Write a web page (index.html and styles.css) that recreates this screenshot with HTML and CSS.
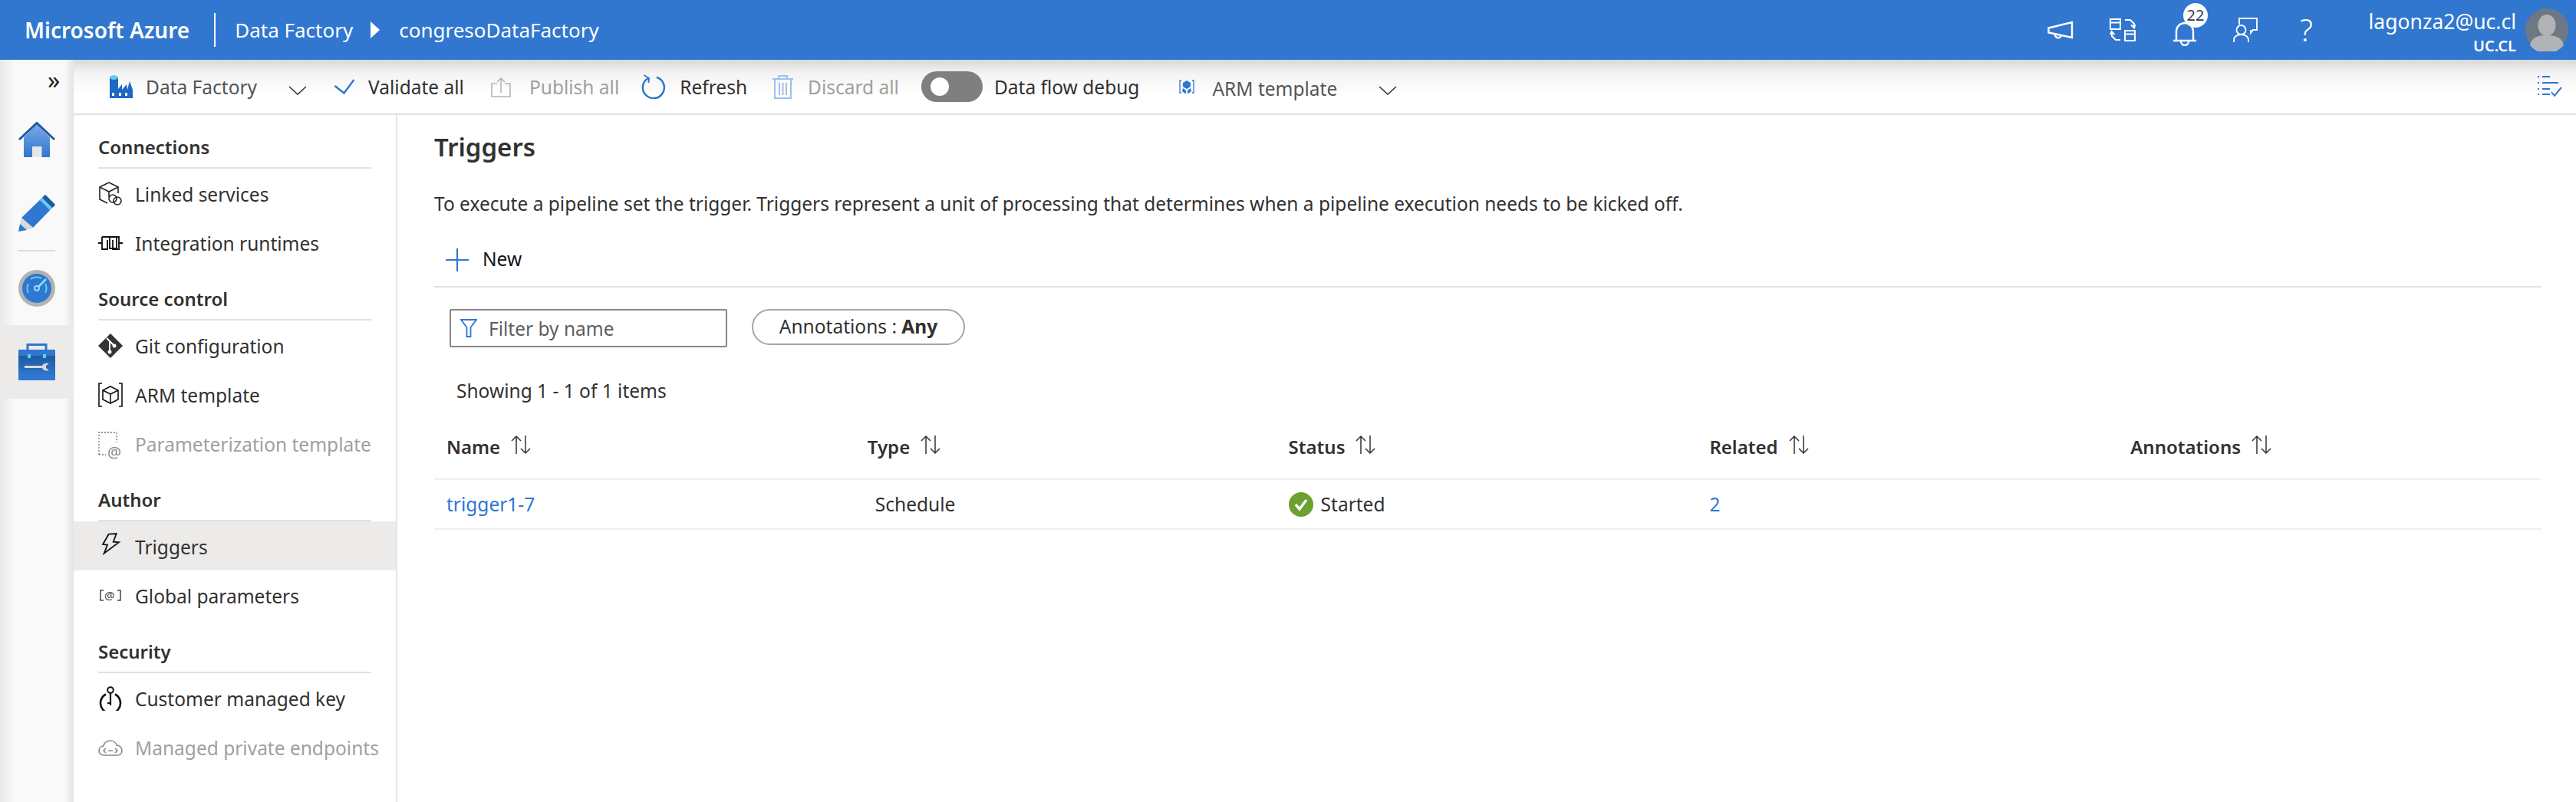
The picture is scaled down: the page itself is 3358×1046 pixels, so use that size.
FILE: index.html
```html
<!DOCTYPE html>
<html lang="en">
<head>
    <meta charset="UTF-8">
    <title>Triggers - Data Factory</title>
    <link rel="stylesheet" href="styles.css">
</head>
<body>
    <header class="topbar">
        <span class="brand">Microsoft Azure</span>
        <span class="crumb">Data Factory</span>
        <svg class="crumb-arrow" viewBox="0 0 12 22"><path d="M0 0L12 11L0 22Z" fill="#fff"/></svg>
        <span class="crumb">congresoDataFactory</span>

        <div class="top-icons">
            <svg class="top-icon megaphone" viewBox="0 0 34 24" fill="none" stroke="#fff" stroke-width="2.4"><path d="M1.500 9.500L32 2V22L1.500 15.500Z"/><path d="M10 17.500a4 4 0 0 0 8 1.500"/></svg>
            <svg class="top-icon switcher" viewBox="0 0 34 30" fill="none" stroke="#fff" stroke-width="2"><rect x="1" y="1" width="13" height="13"/><path d="M1 5.500H14M20 2H27L32 7V12M28 8.500L32 12.500L33.500 8"/><rect x="20" y="16" width="13" height="13"/><path d="M20 20.500H33M14 28H8L3 23V17M6.500 21L2.500 17L1 21"/></svg>
            <div class="bell-wrap">
                <svg class="bell" viewBox="0 0 30 32" fill="none" stroke="#fff" stroke-width="2.400"><path d="M4 24V13a11 11 0 0 1 22 0V24M0 25H30"/><path d="M10 26a5 5 0 0 0 10 0"/></svg>
                <span class="badge">22</span>
            </div>
            <svg class="top-icon feedback" viewBox="0 0 32 32" fill="none" stroke="#fff" stroke-width="1.800"><path d="M8 9V1H31V16H26L23 20V16"/><circle cx="10.500" cy="16" r="6"/><path d="M1 32V29C1 25 5 22 10.500 22S20 25 20 29V32"/></svg>
            <span class="help">?</span>
        </div>

        <div class="user">
            <span class="user-mail">lagonza2@uc.cl</span>
            <span class="user-org">UC.CL</span>
        </div>
        <svg class="avatar" viewBox="0 0 56 56">
            <circle cx="28" cy="28" r="28" fill="#6e7884"/>
            <ellipse cx="28" cy="22" rx="11.500" ry="14" fill="#b1b3b6"/>
            <path d="M6 48C8 38 16 35 28 35S48 38 50 48A28 28 0 0 1 6 48Z" fill="#b1b3b6"/>
        </svg>
    </header>

    <div class="shell">
        <nav class="rail">
            <div class="rail-expand">»</div>
            <svg class="rail-icon home" viewBox="0 0 48 46">
                <defs>
                    <linearGradient id="blueDown" x1="0" y1="0" x2="0" y2="1"><stop offset="0" stop-color="#7aa9e6"/><stop offset="1" stop-color="#2f77d0"/></linearGradient>
                </defs>
                <path d="M7 20L24 3L41 20V46H7Z" fill="url(#blueDown)"/>
                <path d="M1 23L24 1.500L47 23" fill="none" stroke="#1f5a9e" stroke-width="3"/>
                <rect x="18" y="32" width="12.500" height="14" fill="#e6e6e6"/>
            </svg>
            <svg class="rail-icon pencil" viewBox="0 0 48 48">
                <path d="M4 30L35 0L48 13L19 43Z" fill="#2f77d0"/>
                <path d="M33 2L35 0L48 13L46 15L44 17L31 4Z" fill="#1f5a9e"/>
                <path d="M28 7L31 4L44 17L41 20Z" fill="#63cdf2"/>
                <path d="M4 30L19 43L11 46L2 38Z" fill="#d9d9d9"/>
                <path d="M2 38L11 46L0 48Z" fill="#2f77d0"/>
            </svg>
            <div class="rail-rule"></div>
            <svg class="rail-icon gauge" viewBox="0 0 48 48" fill="none">
                <circle cx="24" cy="24" r="24" fill="#b3b3b3"/>
                <circle cx="24" cy="24" r="19" fill="#2f77d0"/>
                <circle cx="24" cy="24" r="3" stroke="#8fe0f8" stroke-width="2"/>
                <path d="M26 22L36 12" stroke="#8fe0f8" stroke-width="2.500"/>
                <path d="M13 30a13 13 0 0 1 0-12M16 12a14 14 0 0 1 14-1M35 18a13 13 0 0 1 0 12" stroke="#63cdf2" stroke-width="2"/>
            </svg>
            <div class="rail-active">
                <svg class="rail-icon tools" viewBox="0 0 48 48">
                    <defs>
                        <linearGradient id="boxDown" x1="0" y1="0" x2="0" y2="1"><stop offset="0" stop-color="#1f5a9e"/><stop offset="1" stop-color="#2f77d0"/></linearGradient>
                    </defs>
                    <path d="M12 8V1.500H36V8" fill="none" stroke="#2f77d0" stroke-width="3"/>
                    <rect x="0" y="8" width="48" height="40" rx="1" fill="#2f77d0"/>
                    <rect x="0" y="16" width="48" height="26" fill="url(#boxDown)"/>
                    <rect x="12" y="14" width="4" height="5" fill="#63cdf2"/>
                    <rect x="32" y="14" width="4" height="5" fill="#63cdf2"/>
                    <path d="M8 29H31C32 26 36 25 40 26L36 29V32L40 35C36 36 32 35 31 32H8Z" fill="#d9d9d9"/>
                </svg>
            </div>
        </nav>

        <div class="workspace">
            <div class="toolbar">
                <svg class="tb-icon factory" viewBox="0 0 30 30">
                    <rect x="0" y="3" width="11" height="27" fill="#1d68c4"/>
                    <ellipse cx="5.500" cy="3" rx="5.500" ry="3" fill="#63cdf2"/>
                    <path d="M11 30V18L16 12V19L22 12L23 19L26 8L30 19V30Z" fill="#1d68c4"/>
                    <rect x="3" y="23" width="3" height="4" fill="#fff"/><rect x="12" y="23" width="3" height="4" fill="#fff"/><rect x="20" y="23" width="3" height="4" fill="#fff"/>
                </svg>
                <span class="tb-text tb-strong tb-factory">Data Factory</span>
                <svg class="chev chev-a" viewBox="0 0 24 12" fill="none" stroke="#222" stroke-width="1.300"><path d="M1 1L12 11L23 1"/></svg>
                <svg class="tb-icon check" viewBox="0 0 26 20" fill="none" stroke="#2d76d2" stroke-width="2.400"><path d="M0.500 9L12.500 18.500L25.500 1"/></svg>
                <span class="tb-text tb-dark tb-validate">Validate all</span>
                <svg class="tb-icon publish" viewBox="0 0 26 27" fill="none" stroke="#b5b5b5" stroke-width="1.600"><path d="M8 9H1V26H25V9H18M13 21V2M8 7L13 2L18 7"/></svg>
                <span class="tb-text tb-muted tb-publish">Publish all</span>
                <svg class="tb-icon refresh" viewBox="0 0 32 32" fill="none" stroke="#2d76d2" stroke-width="2.500"><path d="M20 3.800A14 14 0 1 1 9 5"/><path d="M3.500 1L10 5L9.500 11" stroke-width="2"/></svg>
                <span class="tb-text tb-dark tb-refresh">Refresh</span>
                <svg class="tb-icon discard" viewBox="0 0 27 31" fill="none" stroke="#9dc0ea" stroke-width="2"><path d="M0 5H27M8 5V1H19V5M3 5V30H24V5M9 10V26M13.500 10V26M18 10V26"/></svg>
                <span class="tb-text tb-muted tb-discard">Discard all</span>
                <span class="toggle"><span class="toggle-knob"></span></span>
                <span class="tb-text tb-dark tb-debug">Data flow debug</span>
                <svg class="tb-icon armblue" viewBox="0 0 20 18" fill="none"><path d="M10 1L15 4V9L10 12L5 9V4Z" fill="#2d76d2"/><path d="M5 11L9 14V18H8L4 15ZM15 11L11 14V18H12L16 15Z" fill="#2d76d2"/><path d="M3 1H1V17H3M17 1H19V17H17" stroke="#2d76d2" stroke-width="1.300"/></svg>
                <span class="tb-text tb-strong tb-arm">ARM template</span>
                <svg class="chev" viewBox="0 0 24 12" fill="none" stroke="#222" stroke-width="1.300"><path d="M1 1L12 11L23 1"/></svg>
                <svg class="tb-icon tasks" viewBox="0 0 32 28" fill="none" stroke="#2d76d2" stroke-width="2"><path d="M0 1H2M6 1H16M0 9H2M6 9H27M0 17H2M6 17H16M0 24H2M6 24H16"/><path d="M18 21L22 26L31 15"/></svg>
            </div>

            <div class="panes">
                <aside class="sidenav">
                    <h3 class="nav-title">Connections</h3>
                    <a class="nav-item">
                        <svg class="nav-icon" viewBox="0 0 32 32" fill="none" stroke="#222" stroke-width="1.600"><path d="M14 1L26 7V15M14 1L2 7V23L12 28M2 7L14 13L26 7M14 13V20"/><circle cx="19" cy="22" r="5"/><circle cx="25" cy="25" r="5"/></svg>
                        <span>Linked services</span>
                    </a>
                    <a class="nav-item">
                        <svg class="nav-icon" viewBox="0 0 32 32" fill="none" stroke="#111" stroke-width="1.800"><path d="M0 16H5M27 16H32M5 8H15V23H24V8H15M5 8V24H12V12"/><path d="M15 8H27V24H19V12"/></svg>
                        <span>Integration runtimes</span>
                    </a>

                    <h3 class="nav-title">Source control</h3>
                    <a class="nav-item">
                        <svg class="nav-icon" viewBox="0 0 32 32"><path d="M16 0L32 16L16 32L0 16Z" fill="#333"/><path d="M11 6L21 16M15 11V24" stroke="#fff" stroke-width="2" fill="none"/><circle cx="15" cy="24" r="2.500" fill="#fff"/><circle cx="21" cy="16" r="2.500" fill="#fff"/></svg>
                        <span>Git configuration</span>
                    </a>
                    <a class="nav-item">
                        <svg class="nav-icon" viewBox="0 0 32 32" fill="none" stroke="#111" stroke-width="1.600"><path d="M5 1H1V31H5M27 1H31V31H27"/><path d="M16 5L26 10V22L16 27L6 22V10Z"/><path d="M6 10L16 15L26 10M16 15V27"/></svg>
                        <span>ARM template</span>
                    </a>
                    <a class="nav-item nav-off">
                        <svg class="nav-icon" viewBox="0 0 32 32" fill="none"><path d="M1 30V1H24V14M1 30H10" stroke="#777" stroke-width="1.300" stroke-dasharray="2 2"/></svg>
                        <span class="nav-at">@</span>
                        <span>Parameterization template</span>
                    </a>

                    <h3 class="nav-title">Author</h3>
                    <a class="nav-item nav-on">
                        <svg class="nav-icon icon-raised" viewBox="0 0 32 32" fill="none" stroke="#111" stroke-width="1.800"><path d="M13.700 4.700L23.700 4L19.700 14.700L27 15.300L7.700 29.700L12 18.700L6 18Z"/></svg>
                        <span>Triggers</span>
                    </a>
                    <a class="nav-item">
                        <svg class="nav-icon" viewBox="0 0 32 32" fill="none" stroke="#444" stroke-width="1.500"><path d="M7 9H3V22H7M25 9H29V22H25"/></svg>
                        <span class="nav-at nav-at-small">@</span>
                        <span>Global parameters</span>
                    </a>

                    <h3 class="nav-title">Security</h3>
                    <a class="nav-item">
                        <svg class="nav-icon" viewBox="0 0 32 32" fill="none" stroke="#111"><circle cx="16" cy="5" r="3.800" stroke-width="2"/><path d="M16 9V25M12 22H16" stroke-width="2.200"/><path d="M10 10.500A13 13 0 1 0 22 10.500" stroke-width="2.600"/></svg>
                        <span>Customer managed key</span>
                    </a>
                    <a class="nav-item nav-off">
                        <svg class="nav-icon" viewBox="0 0 32 32" fill="none" stroke="#888" stroke-width="1.600"><path d="M8 26C3 26 1 23 1 20C1 16 4 14 7 14C8 9 12 7 16 7C20 7 23 10 24 13C28 13 31 16 31 20C31 24 28 26 25 26Z"/><path d="M10 17L7 20L10 23M22 17L25 20L22 23M13 20H19"/></svg>
                        <span>Managed private endpoints</span>
                    </a>
                </aside>

                <main class="content">
                    <h1 class="page-title">Triggers</h1>
                    <p class="page-desc">To execute a pipeline set the trigger. Triggers represent a unit of processing that determines when a pipeline execution needs to be kicked off.</p>

                    <div class="actions">
                        <svg class="plus" viewBox="0 0 30 30" stroke="#2d76d2" stroke-width="2"><path d="M15 0V30M0 15H30"/></svg>
                        <span class="action-label">New</span>
                    </div>

                    <div class="filters">
                        <div class="filter-box">
                            <svg class="funnel" viewBox="0 0 22 24" fill="none" stroke="#2d76d2" stroke-width="1.800"><path d="M1 1H21L13.500 11V23H8.500V11Z"/></svg>
                            <span>Filter by name</span>
                        </div>
                        <div class="pill">Annotations : <b>Any</b></div>
                    </div>

                    <div class="count">Showing 1 - 1 of 1 items</div>

                    <div class="grid-row grid-head">
                        <div class="cell">Name<svg class="sort" viewBox="0 0 28 26"><path d="M8 25V2M2 8L8 2L14 8M20 1V24M14 18L20 24L26 18" fill="none" stroke="#333" stroke-width="1.500"/></svg></div>
                        <div class="cell">Type<svg class="sort" viewBox="0 0 28 26"><path d="M8 25V2M2 8L8 2L14 8M20 1V24M14 18L20 24L26 18" fill="none" stroke="#333" stroke-width="1.500"/></svg></div>
                        <div class="cell">Status<svg class="sort" viewBox="0 0 28 26"><path d="M8 25V2M2 8L8 2L14 8M20 1V24M14 18L20 24L26 18" fill="none" stroke="#333" stroke-width="1.500"/></svg></div>
                        <div class="cell">Related<svg class="sort" viewBox="0 0 28 26"><path d="M8 25V2M2 8L8 2L14 8M20 1V24M14 18L20 24L26 18" fill="none" stroke="#333" stroke-width="1.500"/></svg></div>
                        <div class="cell">Annotations<svg class="sort" viewBox="0 0 28 26"><path d="M8 25V2M2 8L8 2L14 8M20 1V24M14 18L20 24L26 18" fill="none" stroke="#333" stroke-width="1.500"/></svg></div>
                    </div>
                    <div class="grid-row grid-body">
                        <div class="cell"><a class="link">trigger1-7</a></div>
                        <div class="cell cell-type">Schedule</div>
                        <div class="cell">
                            <svg class="ok" viewBox="0 0 32 32"><circle cx="16" cy="16" r="16" fill="#6ba131"/><path d="M9 16L14 22L23 10" fill="none" stroke="#fff" stroke-width="3.500"/></svg>
                            <span>Started</span>
                        </div>
                        <div class="cell"><a class="link">2</a></div>
                        <div class="cell"></div>
                    </div>
                </main>
            </div>
        </div>
    </div>
</body>
</html>
```

FILE: styles.css
```css
html,
body {
    margin: 0;
    height: 100%;
    overflow: hidden;
    background: #fff;
}

body {
    font-family: "Noto Sans", "Open Sans", sans-serif;
    font-size: 24.5px;
    color: #323130;
}

/* top blue bar */
.topbar {
    height: 78px;
    background: #3177cf;
    color: #fff;
    display: flex;
    align-items: center;
    padding-left: 32px;
    padding-right: 10px;
}

.brand {
    font-size: 28px;
    font-weight: 600;
    padding-right: 32px;
    margin-right: 25px;
    border-right: 2px solid #fff;
    line-height: 44px;
}

.crumb {
    font-size: 26px;
}

.crumb-arrow {
    width: 12px;
    height: 22px;
    margin: 0 25px 0 23px;
}

.top-icons {
    margin-left: auto;
    display: flex;
    align-items: center;
}

.top-icon {
    display: block;
}

.megaphone {
    width: 34px;
    height: 24px;
}

.switcher {
    width: 34px;
    height: 30px;
    margin-left: 47px;
}

.bell-wrap {
    position: relative;
    width: 30px;
    height: 32px;
    margin-left: 49px;
    margin-top: 10px;
}

.bell {
    display: block;
    width: 30px;
    height: 32px;
}

.badge {
    position: absolute;
    left: 13px;
    top: -24px;
    width: 32px;
    height: 32px;
    border-radius: 50%;
    background: #fff;
    color: #333f58;
    font-size: 20px;
    line-height: 32px;
    text-align: center;
}

.feedback {
    width: 32px;
    height: 32px;
    margin-left: 48px;
}

.help {
    font-size: 40px;
    font-weight: 300;
    line-height: 40px;
    margin-left: 55px;
    width: 20px;
}

.user {
    display: flex;
    flex-direction: column;
    align-items: flex-end;
    margin-left: 70px;
    margin-top: 6px;
    width: 192px;
}

.user-mail {
    font-size: 26.500px;
    line-height: 34px;
}

.user-org {
    font-size: 20px;
    font-weight: 600;
    line-height: 26px;
    margin-top: 2px;
}

.avatar {
    width: 56px;
    height: 56px;
    margin-left: 12px;
}

/* page frame */
.shell {
    display: flex;
    height: 968px;
}

.rail {
    width: 96px;
    flex: none;
    background: linear-gradient(to right, #e9e9e9, #f9f9f9 18px, #f9f9f9 84px, #e4e4e4);
    display: flex;
    flex-direction: column;
    align-items: center;
}

.rail-expand {
    align-self: flex-end;
    height: 81px;
    width: 34px;
    font-size: 32px;
    line-height: 52px;
    color: #222;
}

.rail-icon {
    display: block;
    width: 48px;
    height: 48px;
}

.home {
    height: 46px;
}

.pencil {
    margin-top: 49px;
}

.rail-rule {
    width: 48px;
    height: 2px;
    background: #dcdcdc;
    margin-top: 24px;
}

.gauge {
    margin-top: 24px;
}

.rail-active {
    width: 100%;
    height: 96px;
    margin-top: 24px;
    background: #edebe9;
    display: flex;
    align-items: center;
    justify-content: center;
}

.workspace {
    flex: 1;
    min-width: 0;
}

/* toolbar */
.toolbar {
    height: 70px;
    display: flex;
    align-items: center;
    border-bottom: 2px solid #e1e1e1;
    background: linear-gradient(to bottom, #d9d9d9, #f4f4f4 18px, #fff 46px);
    padding-left: 47px;
    padding-right: 18px;
}

.tb-icon {
    display: block;
    flex: none;
}

.tb-text {
    white-space: nowrap;
}

.tb-strong {
    color: #555;
}

.tb-dark {
    color: #323130;
}

.tb-muted {
    color: #a19f9d;
}

.factory {
    width: 30px;
    height: 30px;
}

.tb-factory {
    margin-left: 17px;
}

.chev {
    display: block;
    width: 24px;
    height: 12px;
    flex: none;
    margin-left: 54px;
    margin-top: 10px;
}

.chev-a {
    margin-left: 41px;
}

.check {
    width: 26px;
    height: 20px;
    margin-left: 36px;
}

.tb-validate {
    margin-left: 18px;
}

.publish {
    width: 26px;
    height: 27px;
    margin-left: 35px;
}

.tb-publish {
    margin-left: 24px;
}

.refresh {
    width: 32px;
    height: 32px;
    margin-left: 29px;
}

.tb-refresh {
    margin-left: 18px;
}

.discard {
    width: 27px;
    height: 31px;
    margin-left: 33px;
}

.tb-discard {
    margin-left: 19px;
}

.toggle {
    width: 80px;
    height: 40px;
    border-radius: 20px;
    background: #7f7f7f;
    margin-left: 29px;
    flex: none;
    display: flex;
    align-items: center;
    padding-left: 12px;
    box-sizing: border-box;
}

.toggle-knob {
    width: 24px;
    height: 24px;
    border-radius: 50%;
    background: #fff;
}

.tb-debug {
    margin-left: 15px;
}

.armblue {
    width: 20px;
    height: 18px;
    margin-left: 52px;
}

.tb-arm {
    margin-left: 23px;
    margin-top: 4px;
}

.tasks {
    width: 32px;
    height: 28px;
    margin-left: auto;
}

/* left menu */
.panes {
    display: flex;
    height: 898px;
}

.sidenav {
    width: 420px;
    flex: none;
    border-right: 2px solid #e6e6e6;
}

.nav-title {
    margin: 0 32px;
    height: 70px;
    box-sizing: border-box;
    padding-top: 25px;
    border-bottom: 2px solid #e1e1e1;
    font-size: 24px;
    font-weight: 600;
    line-height: 34px;
}

.nav-item {
    display: flex;
    position: relative;
    height: 64px;
    box-sizing: border-box;
    padding: 17px 0 0 32px;
    line-height: 34px;
    white-space: nowrap;
}

.nav-item.nav-on {
    background: #edebe9;
}

.nav-off {
    color: #a19f9d;
}

.nav-icon {
    display: block;
    width: 32px;
    height: 32px;
    margin-right: 16px;
    flex: none;
}

.icon-raised {
    margin-top: -5px;
}

.nav-at {
    position: absolute;
    left: 44px;
    top: 33px;
    font-size: 20px;
    line-height: 22px;
    color: #888;
}

.nav-at-small {
    left: 40px;
    top: 21px;
    font-size: 15px;
    color: #444;
}

/* main area */
.content {
    flex: 1;
    min-width: 0;
    padding: 20px 45px 0 48px;
}

.page-title {
    margin: 0;
    font-size: 33px;
    font-weight: 600;
    line-height: 44px;
}

.page-desc {
    margin: 35px 0 0;
    line-height: 34px;
    white-space: nowrap;
}

.actions {
    display: flex;
    align-items: center;
    height: 68px;
    margin-top: 22px;
    padding-left: 15px;
    border-bottom: 2px solid #e1e1e1;
    color: #111;
}

.action-label {
    margin-top: -3px;
}

.plus {
    display: block;
    width: 30px;
    height: 30px;
    margin-right: 18px;
}

.filters {
    display: flex;
    align-items: flex-start;
    margin-top: 28px;
    padding-left: 20px;
}

.filter-box {
    width: 362px;
    height: 50px;
    box-sizing: border-box;
    border: 2px solid #8a8886;
    border-radius: 2px;
    display: flex;
    align-items: center;
    padding-left: 12px;
    color: #605e5c;
}

.funnel {
    width: 22px;
    height: 24px;
    margin-right: 15px;
}

.pill {
    margin-left: 32px;
    width: 278px;
    height: 47px;
    box-sizing: border-box;
    border: 2px solid #a6a6a6;
    border-radius: 24px;
    text-align: center;
    line-height: 42px;
}

.count {
    margin-top: 40px;
    padding-left: 29px;
    line-height: 34px;
}

.grid-row {
    display: grid;
    grid-template-columns: repeat(4, 548.800px) 1fr;
    border-bottom: 2px solid #f0f0f0;
}

.grid-head {
    margin-top: 18px;
    height: 81px;
    box-sizing: border-box;
    padding-bottom: 4px;
    font-size: 24px;
    font-weight: 600;
    align-items: center;
}

.grid-body {
    height: 65px;
    box-sizing: border-box;
    align-items: center;
}

.cell {
    display: flex;
    align-items: center;
    padding-left: 16px;
    line-height: 34px;
}

.cell-type {
    padding-left: 26px;
}

.sort {
    width: 28px;
    height: 26px;
    margin-left: 13px;
    margin-top: -6px;
}

.ok {
    width: 32px;
    height: 32px;
    margin-right: 10px;
}

.link {
    color: #2d76d2;
}
```
